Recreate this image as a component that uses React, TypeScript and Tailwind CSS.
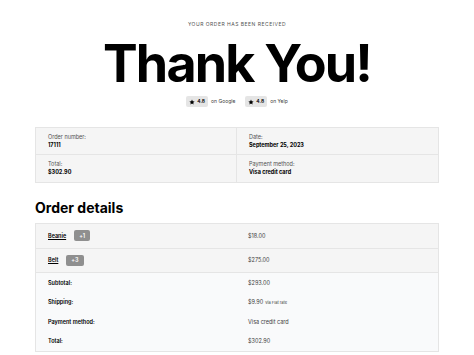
import React from 'react';

const Star: React.FC = () => (
  <svg viewBox="0 0 24 24" className="w-[6px] h-[6px] fill-black">
    <path d="M12 2l3.1 6.6 7.2.9-5.3 5 1.4 7.1L12 18.1 5.6 21.6 7 14.5 1.7 9.5l7.2-.9z" />
  </svg>
);

const App: React.FC = () => {
  const info = [
    { label: 'Order number:', value: '17111' },
    { label: 'Date:', value: 'September 25, 2023' },
    { label: 'Total:', value: '$302.90' },
    { label: 'Payment method:', value: 'Visa credit card' },
  ];

  const items = [
    { name: 'Beanie', qty: '+1', price: '$18.00' },
    { name: 'Belt', qty: '+3', price: '$275.00' },
  ];

  return (
    <div className="w-[474px] h-[355px] bg-white overflow-hidden font-['Inter',sans-serif] text-black">
      <div className="mx-[35px] pt-[21px]">
        {/* Header */}
        <div className="text-center text-[5px] tracking-[0.1em] text-neutral-600 leading-[6px]">
          YOUR ORDER HAS BEEN RECEIVED
        </div>
        <h1 className="text-center font-bold text-[52px] leading-[56px] tracking-[-0.035em] mt-[9px]">
          Thank You!
        </h1>
        <div className="flex justify-center items-center gap-[3px] mt-[4px] text-[5px] text-neutral-700">
          <span className="flex items-center gap-[2px] bg-neutral-200 rounded-[2px] px-[3px] h-[11px] font-semibold text-black">
            <Star /> 4.8
          </span>
          <span className="mr-[7px]">on Google</span>
          <span className="flex items-center gap-[2px] bg-neutral-200 rounded-[2px] px-[3px] h-[11px] font-semibold text-black">
            <Star /> 4.8
          </span>
          <span>on Yelp</span>
        </div>

        {/* Order info */}
        <div className="grid grid-cols-2 mt-[20px] border border-neutral-200 bg-neutral-100 text-[5.5px]">
          {info.map((row, i) => (
            <div
              key={row.label}
              className={`h-[27px] flex flex-col justify-center pl-[12px] ${i % 2 === 0 ? 'border-r border-neutral-200' : ''} ${i < 2 ? 'border-b border-neutral-200' : ''}`}
            >
              <div className="text-neutral-600 leading-[7px]">{row.label}</div>
              <div className="font-bold leading-[8px]">{row.value}</div>
            </div>
          ))}
        </div>

        {/* Order details */}
        <h2 className="font-bold text-[14px] mt-[17px] leading-[16px]">Order details</h2>
        <div className="mt-[7px] border border-neutral-200 text-[5.5px]">
          {items.map((item) => (
            <div key={item.name} className="grid grid-cols-2 h-[24.5px] bg-neutral-100 border-b border-neutral-200">
              <div className="flex items-center pl-[12px] gap-[8px]">
                <span className="underline font-semibold">{item.name}</span>
                <span className="bg-[#8f8f8f] text-white rounded-[2px] px-[5px] h-[11px] flex items-center font-semibold">
                  {item.qty}
                </span>
              </div>
              <div className="flex items-center pl-[11px] text-neutral-700">{item.price}</div>
            </div>
          ))}
          <div className="bg-gray-50">
            {[
              ['Subtotal:', '$293.00'],
              ['Shipping:', '$9.90'],
              ['Payment method:', 'Visa credit card'],
              ['Total:', '$302.90'],
            ].map(([label, value]) => (
              <div key={label} className="grid grid-cols-2 h-[19.5px] items-center">
                <div className="pl-[12px] font-semibold">{label}</div>
                <div className="pl-[11px] text-neutral-700">
                  {value}
                  {label === 'Shipping:' && <span className="text-[4px] ml-[2px]">via Flat rate</span>}
                </div>
              </div>
            ))}
          </div>
        </div>
      </div>
    </div>
  );
};

export default App;
